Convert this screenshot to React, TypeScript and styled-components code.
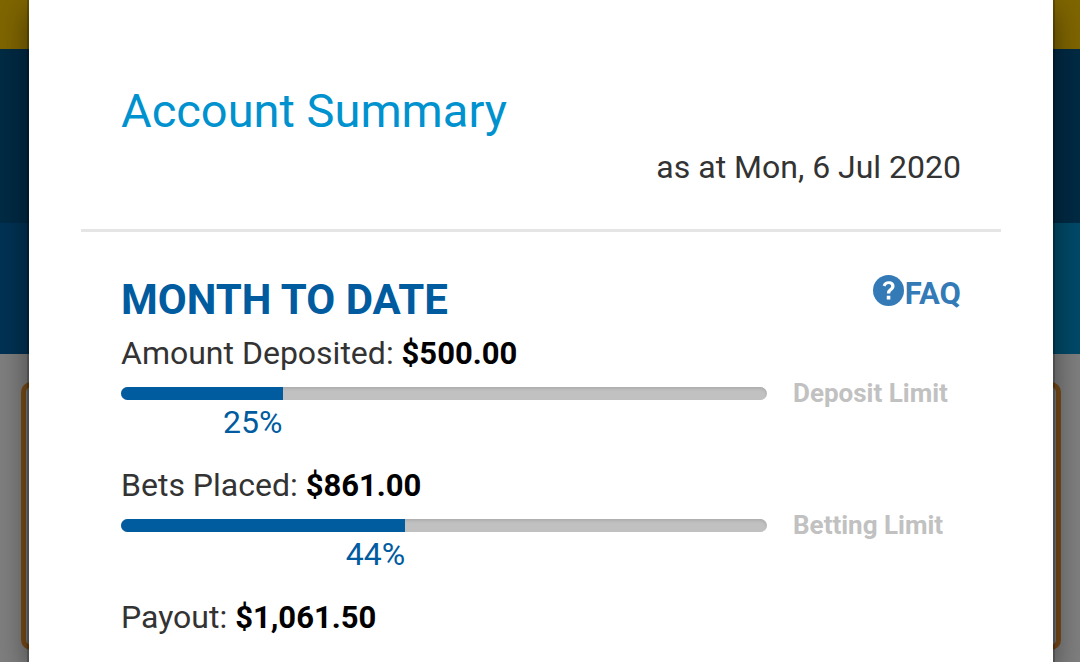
import React from "react";
import styled, { createGlobalStyle } from "styled-components";

const Global = createGlobalStyle`
  * { box-sizing: border-box; }
  body { margin: 0; background: #7f7f7f; font-family: Roboto, "Liberation Sans", sans-serif; color: #333; }
`;
const Page = styled.div`position: relative; min-height: 100vh; overflow: hidden;`;
const Backdrop = styled.div`position: absolute; inset: 0; display: flex; flex-direction: column;`;
const Band = styled.div<{ $h: number; $c: string }>`flex: none; height: ${p => p.$h}px; background: ${p => p.$c};`;
const SplitBand = styled.div`
  flex: none; display: grid; grid-template-columns: 1fr 1fr; height: 131px; background: #004a69;
  &::before { content: ""; background: #003254; }
`;
const Panel = styled.div`height: 268px; flex: none; margin: 28px 19px 0 21px; border: 5px solid #7a4c18; border-radius: 10px;`;
const Dialog = styled.main`
  position: relative; min-height: 100vh; margin: 0 27px 0 29px; padding: 80px 52px 20px;
  background: #fff; box-shadow: 0 0 0 2px rgba(0,0,0,.2), 0 10px 30px rgba(0,0,0,.5);
`;
const Header = styled.header`padding: 0 40px 44px; border-bottom: 3px solid #e5e5e5;`;
const Title = styled.h1`margin: 0; font-size: 47px; line-height: 61px; font-weight: 400; color: #0092ce;`;
const AsAt = styled.p`margin: 8px 0 0; font-size: 32px; line-height: 36px; text-align: right;`;
const Section = styled.section`padding: 40px 40px 0;`;
const Heading = styled.div`display: flex; justify-content: space-between; align-items: flex-start;`;
const Month = styled.h2`margin: 0; font-size: 42px; line-height: 56px; font-weight: 700; color: #005b9f;`;
const Faq = styled.a`
  display: flex; align-items: flex-start; gap: 1px; font-size: 31px; line-height: 44px;
  font-weight: 700; color: #337ab7; text-decoration: none;
  svg { margin-top: 3px; }
`;
const Item = styled.div`height: 132px;`;
const Line = styled.p`margin: 0; font-size: 32px; line-height: 50px; b { font-size: 31px; color: #000; }`;
const Meter = styled.div`display: flex; align-items: center; gap: 26px; height: 28px;`;
const Track = styled.div`
  position: relative; flex: 1; height: 13px; border-radius: 7px; background: #c1c1c1;
  box-shadow: inset 0 2px 3px rgba(0,0,0,.1); overflow: hidden;
`;
const Fill = styled.div`height: 100%; background: #005b9f;`;
const Limit = styled.span`width: 168px; font-size: 26px; line-height: 28px; font-weight: 700; color: #c1c1c1;`;
const PercentRow = styled.div`margin-right: 194px;`;
const Percent = styled.div`font-size: 32px; line-height: 30px; text-align: right; color: #005b9f;`;

function Progress({ label, amount, percent, limit }: { label: string; amount: string; percent: number; limit: string }) {
  return (
    <Item>
      <Line>{label}: <b>{amount}</b></Line>
      <Meter>
        <Track role="progressbar" aria-label={label} aria-valuenow={percent}><Fill style={{ width: `${percent}%` }} /></Track>
        <Limit>{limit}</Limit>
      </Meter>
      <PercentRow><Percent style={{ width: `${percent}%` }}>{percent}%</Percent></PercentRow>
    </Item>
  );
}

export default function App() {
  return (
    <Page>
      <Global />
      <Backdrop aria-hidden="true">
        <Band $h={49} $c="#806600" />
        <Band $h={174} $c="#002a44" />
        <SplitBand />
        <Panel />
      </Backdrop>
      <Dialog>
        <Header>
          <Title>Account Summary</Title>
          <AsAt>as at Mon, 6 Jul 2020</AsAt>
        </Header>
        <Section>
          <Heading>
            <Month>MONTH TO DATE</Month>
            <Faq href="#faq">
              <svg width="31" height="31" viewBox="0 0 32 32" aria-hidden="true">
                <circle cx="16" cy="16" r="16" fill="#337ab7" />
                <path d="M10 10.800C11 8 13.200 6.500 16.200 6.500c3.700 0 6 1.900 6 5 0 4-4.400 4.300-4.400 7.500h-3.400c0-4.800 4.300-5 4.300-7.300 0-1.500-1-2.300-2.600-2.300-1.600 0-2.700.9-3.200 2.500zM14.200 21.500h3.700v3.700h-3.700z" fill="#fff" />
              </svg>
              FAQ
            </Faq>
          </Heading>
          <Progress label="Amount Deposited" amount="$500.00" percent={25} limit="Deposit Limit" />
          <Progress label="Bets Placed" amount="$861.00" percent={44} limit="Betting Limit" />
          <Line>Payout: <b>$1,061.50</b></Line>
        </Section>
      </Dialog>
    </Page>
  );
}
